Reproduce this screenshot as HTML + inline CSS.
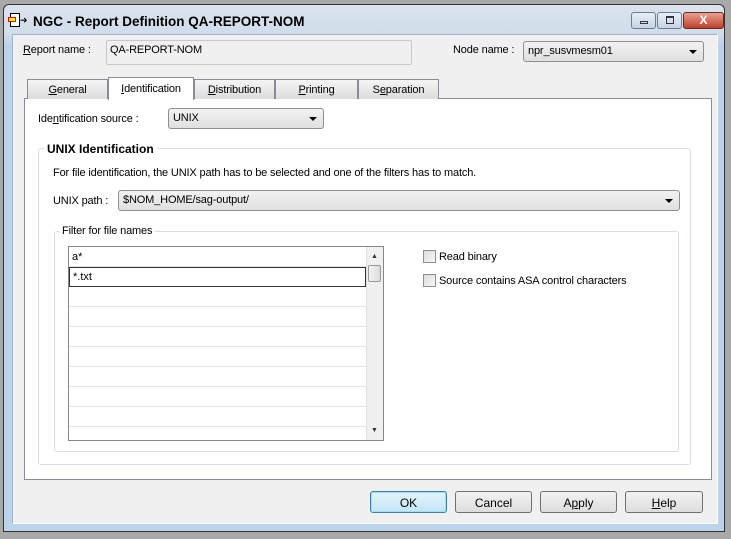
<!DOCTYPE html>
<html><head><style>
*{box-sizing:border-box}
body{margin:0;width:731px;height:539px;background:#a9a9a9;font-family:"Liberation Sans",sans-serif;font-size:11px;color:#000;position:relative;overflow:hidden}
.a{position:absolute}
.win{left:3px;top:4px;width:722px;height:528px;background:linear-gradient(#dbe4ee 0,#cfdcea 30px,#bcd3ec 40px);border:1px solid #333;border-radius:6px 6px 0 0}
.client{left:12px;top:34px;width:706px;height:490px;background:#f0f0f0;border:1px solid #fff;border-top-color:#9fb3c9;border-left-color:#9fb3c9}
.tb{border:1px solid #aab;background:#f6f6f6;border-radius:2px}
.combo{border:1px solid #8e8f8f;border-radius:3px;background:linear-gradient(#f2f2f2,#e0e0e0);padding:3px 4px;}
.arr{position:absolute;right:6px;top:8px;width:0;height:0;border-left:4px solid transparent;border-right:4px solid transparent;border-top:4px solid #000}
.tab{top:79px;height:20px;border:1px solid #898c95;border-bottom:none;background:linear-gradient(#f5f5f5,#dcdcdc);text-align:center;padding-top:4px}
.btn{top:491px;height:22px;border:1px solid #707070;border-radius:3px;background:linear-gradient(#f2f2f2,#dddddd);text-align:center;padding-top:4px;font-size:12px}
.cb{width:13px;height:13px;border:1px solid #8f8f8f;background:linear-gradient(135deg,#dcdcdc,#f8f8f8)}
.row{position:absolute;left:0;width:297px;height:20px;border-bottom:1px solid #e6e6e6}
u{text-decoration:underline}
.tbtn{top:12px;height:17px;border:1px solid #6d7d92;border-radius:3px;background:linear-gradient(#e8eef5,#c8d4e2)}
.n{letter-spacing:-0.15px}
</style></head><body>
<div class="a win"></div>
<div class="a" style="left:10px;top:13px;width:10px;height:14px;border:1px solid #000;background:#fff"></div>
<div class="a" style="left:8px;top:17px;width:8px;height:5px;background:#ff0;border:1px solid #e00"></div>
<div class="a" style="left:20px;top:15px;font-size:9px">➜</div>
<div class="a" style="left:33px;top:14px;font-size:13.5px;font-weight:bold">NGC - Report Definition QA-REPORT-NOM</div>
<div class="a tbtn" style="left:631px;width:25px"><div class="a" style="left:8px;top:8px;width:8px;height:3px;border:1px solid #334"></div></div>
<div class="a tbtn" style="left:657px;width:25px"><div class="a" style="left:8px;top:3px;width:8px;height:8px;border:1px solid #334;border-top-width:2px"></div></div>
<div class="a tbtn" style="left:683px;width:41px;background:linear-gradient(#e8a090,#c0402a);border-color:#6b2a20;color:#fff;font-weight:bold;text-align:center;font-size:12px;line-height:15px">X</div>
<div class="a client"></div>
<div class="a n" style="left:23px;top:44px"><u>R</u>eport name :</div>
<div class="a tb n" style="left:106px;top:40px;width:306px;height:25px;padding:3px 3px;background:#f0f0f0;border-color:#c8c8c8">QA-REPORT-NOM</div>
<div class="a n" style="left:453px;top:44px">Node name :</div>
<div class="a combo n" style="left:523px;top:41px;width:181px;height:21px">npr_susvmesm01<div class="arr"></div></div>
<div class="a" style="left:24px;top:98px;width:688px;height:382px;background:#fff;border:1px solid #898c95"></div>
<div class="a tab n" style="left:27px;width:81px"><u>G</u>eneral</div>
<div class="a tab n" style="left:108px;top:77px;height:23px;width:86px;background:#fff;padding-top:5px"><u>I</u>dentification</div>
<div class="a tab n" style="left:194px;width:81px"><u>D</u>istribution</div>
<div class="a tab n" style="left:275px;width:83px"><u>P</u>rinting</div>
<div class="a tab n" style="left:358px;width:81px">S<u>e</u>paration</div>
<div class="a n" style="left:38px;top:113px">Ide<u>n</u>tification source :</div>
<div class="a combo n" style="left:168px;top:108px;width:156px;height:21px">UNIX<div class="arr"></div></div>
<div class="a" style="left:38px;top:148px;width:653px;height:317px;border:1px solid #d5dfe5;border-radius:3px"></div>
<div class="a" style="left:44px;top:142px;background:#fff;padding:0 3px;font-weight:bold;font-size:12px">UNIX Identification</div>
<div class="a n" style="left:53px;top:167px">For file identification, the UNIX path has to be selected and one of the filters has to match.</div>
<div class="a n" style="left:53px;top:195px">UNIX path :</div>
<div class="a combo n" style="left:118px;top:190px;width:562px;height:21px">$NOM_HOME/sag-output/<div class="arr"></div></div>
<div class="a" style="left:54px;top:231px;width:625px;height:221px;border:1px solid #d5dfe5;border-radius:3px"></div>
<div class="a n" style="left:59px;top:225px;background:#fff;padding:0 3px">Filter for file names</div>
<div class="a" style="left:68px;top:246px;width:316px;height:195px;border:1px solid #828790;overflow:hidden">
<div class="row" style="top:0;padding:4px 3px">a*</div>
<div class="row" style="top:20px;padding:3px 3px;border:1px solid #333;height:20px">*.txt</div>
<div class="row" style="top:40px"></div><div class="row" style="top:60px"></div><div class="row" style="top:80px"></div><div class="row" style="top:100px"></div><div class="row" style="top:120px"></div><div class="row" style="top:140px"></div><div class="row" style="top:160px"></div>
<div class="a" style="left:297px;top:0;width:17px;height:193px;background:#f0f0f0;border-left:1px solid #e0e0e0"></div>
<div class="a" style="left:299px;top:18px;width:13px;height:17px;border:1px solid #999;border-radius:2px;background:linear-gradient(90deg,#f4f4f4,#dcdcdc)"></div>
<div class="a" style="left:302px;top:6px;font-size:7px;color:#333">▲</div>
<div class="a" style="left:302px;top:180px;font-size:7px;color:#333">▼</div>
</div>
<div class="a cb" style="left:423px;top:250px"></div>
<div class="a n" style="left:439px;top:251px">Read binary</div>
<div class="a cb" style="left:423px;top:274px"></div>
<div class="a n" style="left:439px;top:275px">Source contains ASA control characters</div>
<div class="a btn" style="left:370px;width:77px;border-color:#3c7fb1;background:linear-gradient(#e5f4fc,#c4e5f6);box-shadow:inset 0 0 0 1px #9ce0f8">OK</div>
<div class="a btn" style="left:455px;width:77px">Cancel</div>
<div class="a btn" style="left:540px;width:77px">A<u>p</u>ply</div>
<div class="a btn" style="left:625px;width:78px"><u>H</u>elp</div>
</body></html>
